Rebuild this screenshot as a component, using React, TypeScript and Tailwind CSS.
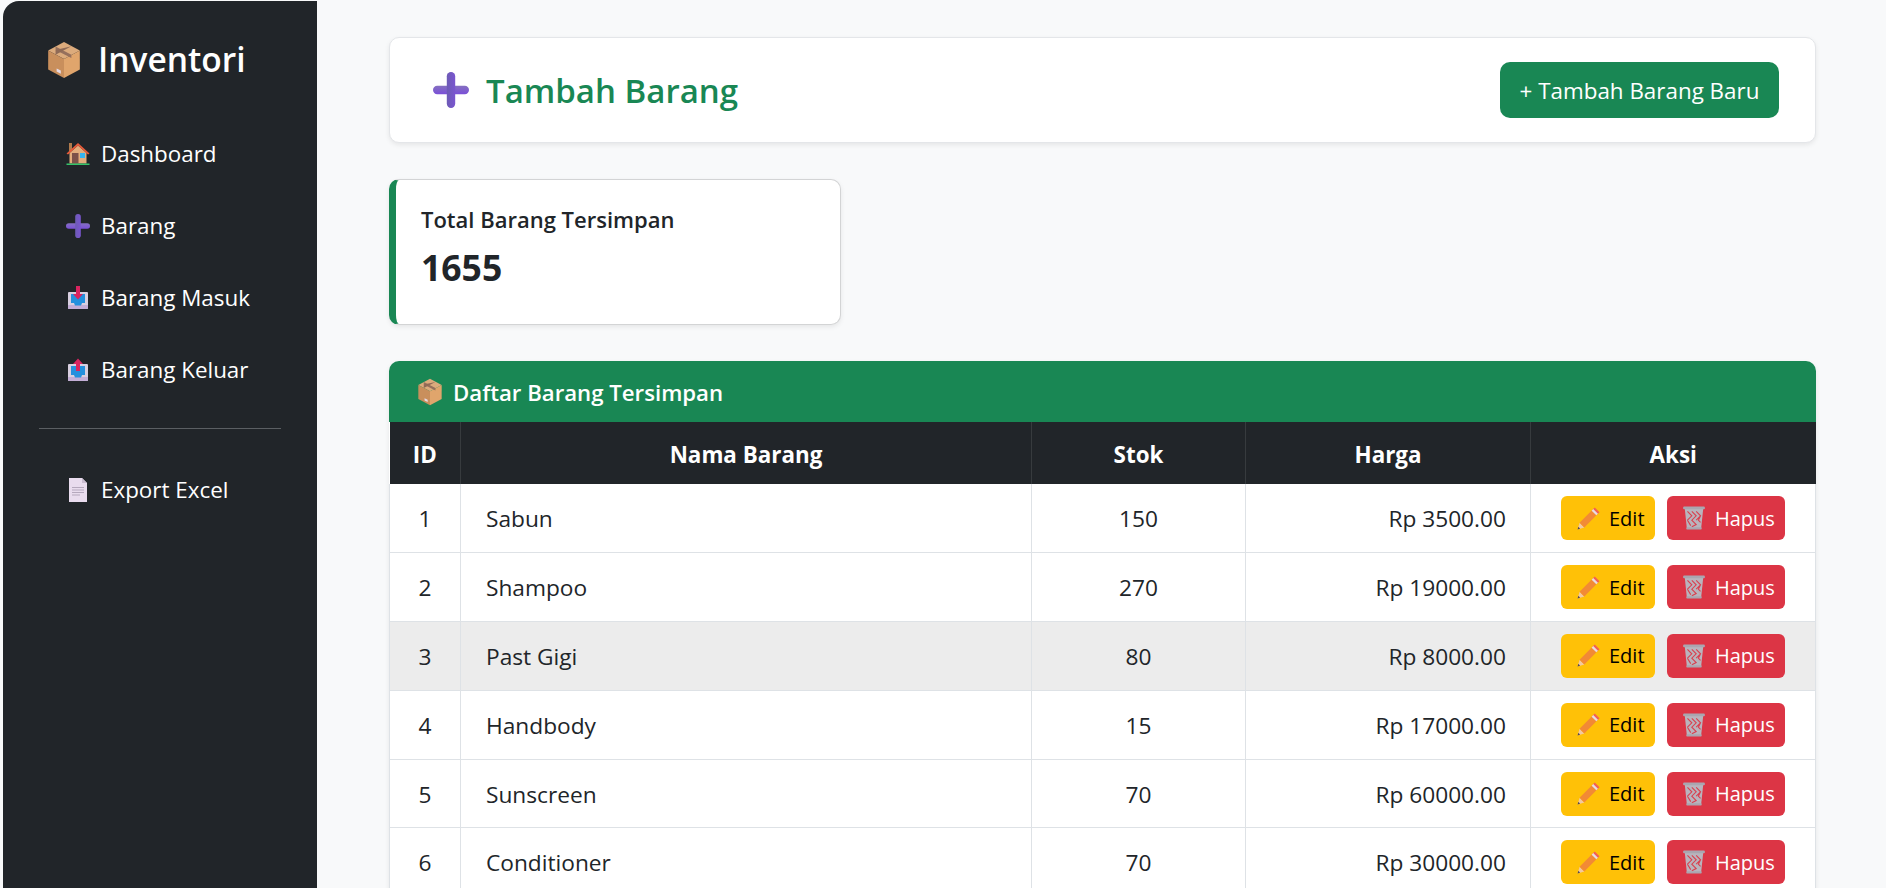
import React from "react";

const font = "font-['Open_Sans','Noto_Sans',sans-serif]";

function Box({ s = 24 }: { s?: number }) {
  return (
    <svg width={s} height={s} viewBox="0 0 32 36" className="shrink-0">
      <path d="M16 1 L31 9 L16 17 L1 9 Z" fill="#dcab7c" />
      <path d="M1 9 L16 17 V35 L1 27 Z" fill="#c98f5c" />
      <path d="M31 9 L16 17 V35 L31 27 Z" fill="#e0a56c" />
      <path d="M8 5.2 L23 13 V16 L8 8.5 Z" fill="#96705c" />
      <path d="M23 5 L8 13 V16 L8 8.5 Z" fill="#8f6a56" />
      <path d="M9 26 L13 28 V31 L9 29 Z" fill="#e6dbe6" />
    </svg>
  );
}
function House({ s = 24 }: { s?: number }) {
  return (
    <svg width={s} height={s} viewBox="0 0 24 24" className="shrink-0">
      <rect x="3" y="1" width="3" height="8" fill="#b07a4c" />
      <path d="M3.5 11 H20.5 V21.5 H3.5 Z" fill="#e3ad7c" />
      <path d="M12 3.5 L20.5 11 H3.5 Z" fill="#e3ad7c" />
      <path d="M0.5 11.5 L12 1 L23.5 11.5 L22 12.5 L12 3.5 L2 12.5 Z" fill="#e85b3a" />
      <rect x="6" y="11" width="6.5" height="10.5" fill="#7d5149" />
      <rect x="14" y="11" width="5" height="5" fill="#35b4f0" />
      <rect x="0.5" y="21.5" width="23" height="1.5" fill="#35c46a" />
    </svg>
  );
}
function Plus({ s = 24 }: { s?: number }) {
  return (
    <svg width={s} height={s} viewBox="0 0 24 24" className="shrink-0">
      <defs>
        <linearGradient id="pv" x1="0" x2="1" y1="0" y2="0">
          <stop offset="0" stopColor="#6d5bb5" />
          <stop offset="1" stopColor="#7a55d0" />
        </linearGradient>
        <linearGradient id="ph" x1="0" x2="0" y1="0" y2="1">
          <stop offset="0" stopColor="#8570c0" />
          <stop offset="1" stopColor="#7a4fd8" />
        </linearGradient>
      </defs>
      <rect x="0" y="9.2" width="24" height="5.6" rx="2.8" fill="url(#ph)" />
      <rect x="9.2" y="0" width="5.6" height="24" rx="2.8" fill="url(#pv)" />
    </svg>
  );
}
function Tray({ up = false, s = 24 }: { up?: boolean; s?: number }) {
  return (
    <svg width={s} height={s} viewBox="0 0 24 24" className="shrink-0">
      <path d="M2 7 Q2 6 3 6 H21 Q22 6 22 7 V22 Q22 23 21 23 H3 Q2 23 2 22 Z" fill="#d8cfe0" />
      <path d="M2 19 H22 V22 Q22 23 21 23 H3 Q2 23 2 22 Z" fill="#c3aed6" />
      <path d="M5 8 H19 V17 L16 17 L15 19.5 H9 L8 17 H5 Z" fill="#2490dd" />
      {up ? (
        <path d="M12 0.5 L17 6 H14 V13 H10 V6 H7 Z" fill="#d9245f" />
      ) : (
        <path d="M10 0 H14 V8 H17 L12 13.5 L7 8 H10 Z" fill="#d9245f" />
      )}
    </svg>
  );
}
function Page({ s = 24 }: { s?: number }) {
  return (
    <svg width={s} height={s} viewBox="0 0 24 24" className="shrink-0">
      <path d="M3 0 H16 L21 5 V24 H3 Z" fill="#e9dcee" />
      <path d="M16 0 L21 5 H16 Z" fill="#c9bcd0" />
      <path d="M6 9.5 H18 M6 12 H18 M6 14.5 H18 M6 17 H14" stroke="#b5a8bd" strokeWidth="1" />
    </svg>
  );
}
function Pencil({ s = 23 }: { s?: number }) {
  return (
    <svg width={s} height={s} viewBox="0 0 22 22" className="shrink-0">
      <path d="M0.5 21.5 L2.5 15 L7 19.5 Z" fill="#f2c9a0" />
      <path d="M0.5 21.5 L1.3 19 L3 20.7 Z" fill="#5a4a4a" />
      <path d="M2.5 15 L15 2.5 L19.5 7 L7 19.5 Z" fill="#f28a35" />
      <path d="M15 2.5 L17 0.5 L21.5 5 L19.5 7 Z" fill="#f25f55" />
      <path d="M14 3.5 L15.5 2 L20 6.5 L18.5 8 Z" fill="#e8dde0" />
    </svg>
  );
}
function Trash({ s = 24 }: { s?: number }) {
  return (
    <svg width={s} height={s} viewBox="0 0 22 22" className="shrink-0">
      <path d="M2.5 2 H19.5 L17.5 21 H4.5 Z" fill="#b9b4bd" />
      <path
        d="M5 5 L9 9 L5 13 M9 5 L13 9 L9 13 L13 17 L9 19 M13 5 L17 9 L13 13 M5 13 L8 18 M17 9 L15 13 L17 15"
        fill="none"
        stroke="#d9404f"
        strokeWidth="1"
      />
      <rect x="1" y="0.5" width="20" height="2.5" rx="1" fill="#aaa6b0" />
      <rect x="4" y="19.5" width="14" height="2" rx="0.6" fill="#aaa6b0" />
    </svg>
  );
}

const nav = [
  { icon: <House />, label: "Dashboard" },
  { icon: <Plus />, label: "Barang" },
  { icon: <Tray />, label: "Barang Masuk" },
  { icon: <Tray up />, label: "Barang Keluar" },
];

const rows = [
  ["1", "Sabun", "150", "Rp 3500.00"],
  ["2", "Shampoo", "270", "Rp 19000.00"],
  ["3", "Past Gigi", "80", "Rp 8000.00"],
  ["4", "Handbody", "15", "Rp 17000.00"],
  ["5", "Sunscreen", "70", "Rp 60000.00"],
  ["6", "Conditioner", "70", "Rp 30000.00"],
];

function NavItem({ icon, label }: { icon: React.ReactNode; label: string }) {
  return (
    <div className="flex h-[72px] items-center pl-[63px]">
      <span className="flex w-[35px] items-center">{icon}</span>
      <span className="text-[22.4px] text-white">{label}</span>
    </div>
  );
}

export default function App() {
  return (
    <div className={`flex h-screen overflow-hidden bg-[#f8f9fa] text-[22.4px] text-[#212529] ${font}`}>
      <aside className="ml-[3px] mt-[1px] w-[314px] shrink-0 rounded-tl-[16px] bg-[#212529]">
        <div className="flex h-[117px] items-center gap-[15px] pl-[42px]">
          <Box s={38} />
          <span className="text-[33.5px] font-semibold text-white">Inventori</span>
        </div>
        <NavItem {...nav[0]} />
        <NavItem {...nav[1]} />
        <NavItem {...nav[2]} />
        <NavItem {...nav[3]} />
        <div className="mx-[36px] mt-[22px] mb-[25px] h-px bg-[#5b5f63]" />
        <NavItem icon={<Page />} label="Export Excel" />
      </aside>
      <main className="min-w-0 flex-1 pl-[72px] pr-[70px] pt-[37px]">
        <div className="flex h-[106px] items-center justify-between rounded-[10px] border border-[#e4e6e9] bg-white pl-[43px] pr-[36px] shadow-[0_2px_5px_rgba(0,0,0,0.08)]">
          <div className="flex items-center gap-[17px]">
            <Plus s={36} />
            <span className="pt-[2px] text-[33px] font-semibold text-[#198754]">Tambah Barang</span>
          </div>
          <div className="flex h-[56px] w-[279px] items-center justify-center rounded-[10px] bg-[#198754] pt-[2px] text-white">
            + Tambah Barang Baru
          </div>
        </div>

        <div className="mt-[36px] h-[146px] w-[452px] rounded-[10px] border border-l-[7px] border-[#d3d4d5] border-l-[#198754] bg-white pl-[25px] pt-[24px] shadow-[0_2px_5px_rgba(0,0,0,0.08)]">
          <div className="text-[22px] font-semibold leading-[30px]">Total Barang Tersimpan</div>
          <div className="mt-[8px] text-[35.5px] font-bold leading-[50px]">1655</div>
        </div>

        <div className="mt-[36px] overflow-hidden rounded-t-[10px] bg-white shadow-[0_2px_5px_rgba(0,0,0,0.08)]">
          <div className="flex h-[61px] items-center gap-[9px] bg-[#198754] pl-[27px] font-semibold text-white">
            <Box s={28} />
            <span className="pt-[2px] text-[22.2px]">Daftar Barang Tersimpan</span>
          </div>
          <table className="w-full table-fixed border-collapse">
            <colgroup>
              <col className="w-[71px]" />
              <col className="w-[571px]" />
              <col className="w-[214px]" />
              <col className="w-[285px]" />
              <col />
            </colgroup>
            <thead>
              <tr className="h-[62px] bg-[#212529] font-bold text-white">
                <th className="border-r border-[#373b3e] pt-[3px]">ID</th>
                <th className="border-r border-[#373b3e] pt-[3px]">Nama Barang</th>
                <th className="border-r border-[#373b3e] pt-[3px]">Stok</th>
                <th className="border-r border-[#373b3e] pt-[3px]">Harga</th>
                <th className="pt-[3px]">Aksi</th>
              </tr>
            </thead>
            <tbody>
              {rows.map((r) => (
                <tr key={r[0]} className={`h-[68.8px] border-b border-[#dee2e6] text-[22.7px] ${r[0] === "3" ? "bg-[#ececec]" : "bg-white"}`}>
                  <td className="border-x border-[#dee2e6] pt-[2px] text-center">{r[0]}</td>
                  <td className="border-r border-[#dee2e6] pl-[25px] pt-[2px]">{r[1]}</td>
                  <td className="border-r border-[#dee2e6] pt-[2px] text-center">{r[2]}</td>
                  <td className="border-r border-[#dee2e6] pr-[24px] pt-[2px] text-right">{r[3]}</td>
                  <td className="border-r border-[#dee2e6]">
                    <div className="flex justify-center gap-[12px]">
                      <div className="flex h-[44px] w-[94px] items-center gap-[9px] rounded-[6px] bg-[#ffc107] pl-[16px] text-[20px] text-black">
                        <Pencil />
                        <span className="pt-[1px]">Edit</span>
                      </div>
                      <div className="flex h-[44px] w-[118px] items-center gap-[9px] rounded-[6px] bg-[#dc3545] pl-[15px] text-[20px] text-white">
                        <Trash />
                        <span className="pt-[1px]">Hapus</span>
                      </div>
                    </div>
                  </td>
                </tr>
              ))}
            </tbody>
          </table>
        </div>
      </main>
    </div>
  );
}
